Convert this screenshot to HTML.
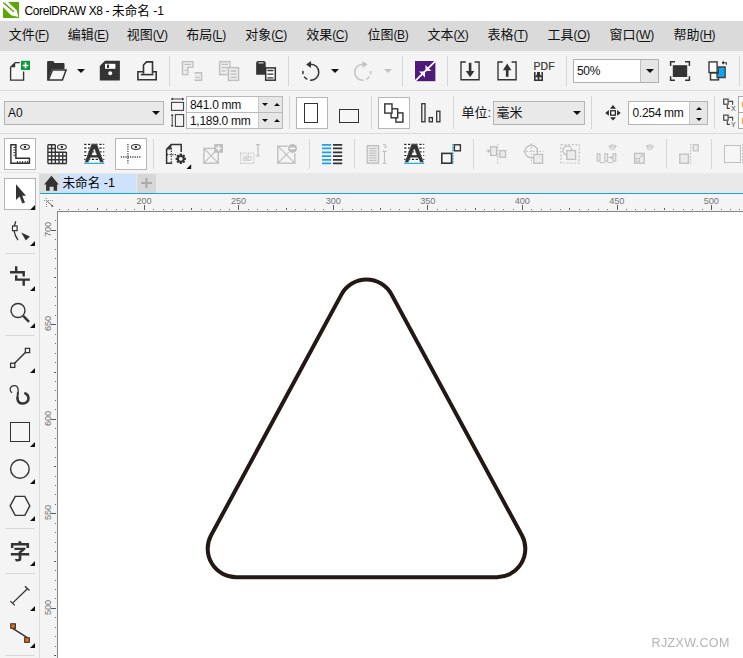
<!DOCTYPE html><html><head><meta charset="utf-8"><title>CorelDRAW X8</title><style>
*{margin:0;padding:0;box-sizing:border-box}
html,body{width:743px;height:658px;overflow:hidden;background:#fff}
body{position:relative;font-family:"Liberation Sans","Noto Sans CJK SC",sans-serif;color:#111;font-size:12px}
.a{position:absolute}
.t{position:absolute;white-space:nowrap;line-height:1}
.vs{position:absolute;width:1px;background:#d2d2d2}
.hs{position:absolute;height:1px;background:#d9d9d9}
.box{position:absolute;border:1px solid #b9b9b9;background:#fff}
.pb{position:absolute;border:1px solid #b6b6b6;background:#fff}
svg{position:absolute;overflow:visible}
.mi{position:absolute;top:28px;font-size:13px;line-height:14px;white-space:nowrap;color:#111}
.mi i{font-style:normal;font-size:12px;letter-spacing:-0.35px}
.mi u{text-decoration:underline;text-underline-offset:1.5px}
.rt{position:absolute;font-size:9.2px;color:#757575;line-height:1;letter-spacing:-0.1px;white-space:nowrap}
</style></head><body><div class="a" style="left:0;top:0;width:743px;height:21px;background:#fff"></div><div class="a" style="left:0;top:21px;width:743px;height:30px;background:#dadada"></div><div class="a" style="left:0;top:51px;width:743px;height:122px;background:#f4f4f4"></div><div class="hs" style="left:0;top:90px;width:743px"></div><div class="hs" style="left:0;top:133px;width:743px"></div><div class="a" style="left:0;top:173px;width:40px;height:485px;background:#f4f4f4"></div><div class="a" style="left:39px;top:173px;width:1px;height:485px;background:#dcdcdc"></div><div class="a" style="left:0;top:172px;width:39px;height:1px;background:#e6e6e6"></div><div class="a" style="left:40px;top:173px;width:703px;height:20px;background:#e9e9e9"></div><div class="a" style="left:60px;top:174px;width:76px;height:19px;background:#cee2fb"></div><div class="a" style="left:136.6px;top:174px;width:19.2px;height:19px;background:#d7d7d7"></div><div class="a" style="left:40px;top:192.7px;width:703px;height:1.4px;background:#0ca4ee"></div><div class="a" style="left:40px;top:194px;width:703px;height:18px;background:#f4f4f4"></div><div class="a" style="left:40px;top:194px;width:17px;height:464px;background:#f4f4f4"></div><div class="a" style="left:57px;top:211px;width:686px;height:447px;background:#fff;border-left:1px solid #858585;border-top:1px solid #858585"></div><svg style="left:3px;top:2px" width="16" height="16" viewBox="0 0 16 16"><rect width="16" height="16" fill="#5ea609"/><path d="M0 0H5.1L13.8 8.4L15.3 15L8.1 13.3L0 5Z" fill="#fff"/><path d="M0.7 0.9L10.6 9.5" stroke="#5ea609" stroke-width="1.4" stroke-linecap="round"/></svg><div class="t" id="title" style="left:24.5px;top:5px;font-size:12px;color:#000"><span id="tl" style="letter-spacing:-0.4px">CorelDRAW X8 - </span><span id="tc" style="font-size:12.6px">未命名</span> -1</div><div class="mi" style="left:8.7px">文件<i>(<u>F</u>)</i></div><div class="mi" style="left:67.7px">编辑<i>(<u>E</u>)</i></div><div class="mi" style="left:126.7px">视图<i>(<u>V</u>)</i></div><div class="mi" style="left:186.2px">布局<i>(<u>L</u>)</i></div><div class="mi" style="left:245.2px">对象<i>(<u>C</u>)</i></div><div class="mi" style="left:306.2px">效果<i>(<u>C</u>)</i></div><div class="mi" style="left:367.4px">位图<i>(<u>B</u>)</i></div><div class="mi" style="left:427.4px">文本<i>(<u>X</u>)</i></div><div class="mi" style="left:487.6px">表格<i>(<u>T</u>)</i></div><div class="mi" style="left:547.6px">工具<i>(<u>O</u>)</i></div><div class="mi" style="left:609.6px">窗口<i>(<u>W</u>)</i></div><div class="mi" style="left:673.6px">帮助<i>(<u>H</u>)</i></div><svg style="left:9px;top:60px" width="22" height="22" viewBox="0 0 22 22"><path d="M10.8 2.6H6.2L1.6 7.2V20.1H14.6V11.4" fill="#f8f8f8" stroke="#333" stroke-width="1.35"/><path d="M1.6 7.2H6.2V2.6Z" fill="#333"/><rect x="12" y="0.8" width="9" height="9.2" fill="#0b9d3a"/><path d="M16.5 2.6V8.2M13.7 5.4H19.3" stroke="#fff" stroke-width="1.5"/></svg><svg style="left:46px;top:60px" width="22" height="22" viewBox="0 0 22 22"><path d="M1.1 20.6V2.2Q1.1 1.1 2.2 1.1H7.2L8.6 3H17.6Q18.5 3 18.5 3.9V9.2H6L1.8 20.6Z" fill="#333"/><path d="M6.5 9.9H20.1L16.4 19.9H2.4Z" fill="#f6f6f6" stroke="#333" stroke-width="1.5" stroke-linejoin="miter"/></svg><svg style="left:77.0px;top:69.0px" width="8" height="4" viewBox="0 0 8 4"><path d="M0 0H8L4.0 4Z" fill="#111"/></svg><svg style="left:99px;top:60px" width="22" height="22" viewBox="0 0 22 22"><path d="M0.8 6L6 0.8H20.9V20.6H0.8Z" fill="#333"/><rect x="6" y="3.8" width="10.4" height="5" fill="#fff"/><rect x="8" y="4.6" width="2" height="3.4" fill="#333"/><circle cx="11.2" cy="13.3" r="2" fill="#fff"/></svg><svg style="left:136px;top:60px" width="22" height="22" viewBox="0 0 22 22"><path d="M7.5 13.8V5L10.6 1.9H16.5V13.8" fill="#f6f6f6" stroke="#333" stroke-width="1.6"/><path d="M7 11.8H1.9V19.8H20.2V11.8H17" fill="none" stroke="#333" stroke-width="1.6"/><path d="M4.8 14.6H17.4" stroke="#333" stroke-width="1.6"/></svg><div class="vs" style="left:169px;top:56px;height:30px;background:#d6d6d6"></div><svg style="left:181px;top:60px" width="23" height="22" viewBox="0 0 23 22"><path d="M1.5 1.6H12V7.4H6.8V14.6H1.5Z" fill="#ececec" stroke="#bfbfbf" stroke-width="1.4"/><path d="M3.5 4.4H10M3.5 10.4H5.5" stroke="#bfbfbf" stroke-width="1.4"/><path d="M13.6 12.8H20.6V20.3H13.6" fill="#ececec" stroke="#bfbfbf" stroke-width="1.4"/><path d="M14 17.4H18.6" stroke="#bfbfbf" stroke-width="1.2"/><path d="M14 12.8H16" stroke="#bfbfbf" stroke-width="1.4" stroke-dasharray="1 1"/></svg><svg style="left:218px;top:60px" width="23" height="22" viewBox="0 0 23 22"><rect x="1.6" y="1.6" width="10.4" height="13" fill="#ececec" stroke="#bfbfbf" stroke-width="1.4"/><path d="M3.6 4.4H10M3.6 7.6H10M3.6 10.8H8" stroke="#bfbfbf" stroke-width="1.3"/><rect x="10.4" y="7.6" width="10.2" height="12.8" fill="#ececec" stroke="#bfbfbf" stroke-width="1.4"/><path d="M12.6 11H18.4M12.6 14.2H18.4M12.6 17.4H18.4" stroke="#bfbfbf" stroke-width="1.3"/></svg><svg style="left:255px;top:60px" width="23" height="22" viewBox="0 0 23 22"><path d="M1.15 14.7V3Q1.15 1 3.15 1H8.7Q10.7 1 10.7 3V14.7Z" fill="#333"/><rect x="3.4" y="2.3" width="5.2" height="1.3" rx="0.6" fill="#dcdcdc"/><rect x="10.7" y="7.9" width="9.6" height="12.3" fill="#fff" stroke="#333" stroke-width="1.5"/><path d="M12.4 10.5H18.4M12.4 14.2H18.4M12.4 17.8H18.4" stroke="#333" stroke-width="1.3"/></svg><div class="vs" style="left:288px;top:56px;height:30px;background:#d6d6d6"></div><svg style="left:299px;top:60px" width="23" height="22" viewBox="0 0 23 22"><g><path d="M11.62 4.20A8.0 8.0 0 1 1 11.06 20.16M8.39 19.39A8.0 8.0 0 0 1 5.19 16.56M4.14 14.14A8.0 8.0 0 0 1 4.00 10.95" fill="none" stroke="#333" stroke-width="1.5"/><path d="M12.0 0.8999999999999995V8.1L7.1000000000000005 4.6Z" fill="#333"/></g></svg><svg style="left:331.0px;top:69.2px" width="8" height="4" viewBox="0 0 8 4"><path d="M0 0H8L4.0 4Z" fill="#111"/></svg><svg style="left:352.1px;top:60px" width="23" height="22" viewBox="0 0 23 22"><g transform="translate(22.6 0) scale(-1 1)"><path d="M11.62 4.20A8.0 8.0 0 1 1 11.06 20.16M8.39 19.39A8.0 8.0 0 0 1 5.19 16.56M4.14 14.14A8.0 8.0 0 0 1 4.00 10.95" fill="none" stroke="#c2c2c2" stroke-width="1.5"/><path d="M12.0 0.8999999999999995V8.1L7.1000000000000005 4.6Z" fill="#c2c2c2"/></g></svg><svg style="left:384.0px;top:69.2px" width="8" height="4" viewBox="0 0 8 4"><path d="M0 0H8L4.0 4Z" fill="#c2c2c2"/></svg><div class="vs" style="left:402px;top:56px;height:30px;background:#d6d6d6"></div><svg style="left:414.8px;top:60.8px" width="20.4" height="20.2" viewBox="0 0 20.4 20.2"><rect x="-0.5" y="-0.5" width="21.4" height="21.2" fill="#fafafa"/><rect width="20.4" height="20.2" fill="#4f1a79"/><path d="M-0.2 20.4L20.6 -0.2" stroke="#fff" stroke-width="1.7"/><path d="M10.5 4.1V10H16.3Z" fill="#fff"/><path d="M4.1 10.5H10V16.4Z" fill="#fff"/></svg><div class="vs" style="left:447px;top:56px;height:30px;background:#d6d6d6"></div><svg style="left:459px;top:60px" width="22" height="22" viewBox="0 0 22 22"><path d="M6.8 2H2V19.7H20.1V2H15.6" fill="none" stroke="#333" stroke-width="1.35"/><path d="M11.1 2.8V13" stroke="#333" stroke-width="2.6"/><path d="M6.8 10.9H15.4L11.1 17.2Z" fill="#333"/></svg><svg style="left:496px;top:60px" width="22" height="22" viewBox="0 0 22 22"><path d="M6.8 2H2V19.7H20.1V2H15.6" fill="none" stroke="#333" stroke-width="1.35"/><path d="M11.2 7.5V16.8" stroke="#333" stroke-width="2.6"/><path d="M6.9 10.2H15.5L11.2 3.6Z" fill="#333"/></svg><div class="t" style="left:533.6px;top:61.9px;font-size:10.4px;color:#333;letter-spacing:0.05px;-webkit-text-stroke:0.2px #333">PDF</div><svg style="left:534px;top:71.8px" width="9" height="9" viewBox="0 0 9 9"><rect x="0" y="0" width="9" height="9" fill="#333"/><path d="M1.6 0H3V2.2L1.6 4.2ZM7.4 0H6V2.2L7.4 4.2Z" fill="#f4f4f4"/><path d="M1.6 5.2H3.6V7.4H1.6ZM5.4 5.2H7.4V7.4H5.4Z" fill="#f4f4f4"/></svg><div class="vs" style="left:566px;top:56px;height:30px;background:#d6d6d6"></div><div class="a" style="left:573px;top:59px;width:86px;height:24px;border:1px solid #b0b0b0;background:#fff"></div><div class="a" style="left:640px;top:60px;width:18px;height:22px;background:#e6e6e6;border-left:1px solid #c0c0c0"></div><div class="t" style="left:577px;top:65px;font-size:12px;letter-spacing:-0.3px">50%</div><svg style="left:645.7px;top:69.0px" width="8" height="4" viewBox="0 0 8 4"><path d="M0 0H8L4.0 4Z" fill="#111"/></svg><svg style="left:669px;top:60px" width="22" height="22" viewBox="0 0 22 22"><rect x="3.8" y="5.2" width="14.4" height="11.8" fill="#333"/><path d="M1.6 6V1.8H6M16 1.8H20.4V6M20.4 16.2V20.2H16M6 20.2H1.6V16.2" fill="none" stroke="#333" stroke-width="1.5"/></svg><svg style="left:707px;top:60px" width="22" height="22" viewBox="0 0 22 22"><rect x="3.5" y="12.9" width="8" height="7" fill="#fbfbfb" stroke="#333" stroke-width="1.4"/><rect x="2" y="1.9" width="8.1" height="10.6" fill="#fbfbfb" stroke="#333" stroke-width="1.35"/><path d="M11.3 7H18.2V17.5H10V13.6H11.3Z" fill="#0aa8f5" stroke="#43403f" stroke-width="1.3"/><path d="M15.4 2.8H19.4V4.8M15.2 2.8L16.8 1.5M15.2 2.8L16.8 4.1" fill="none" stroke="#333" stroke-width="1.1"/></svg><div class="vs" style="left:739px;top:56px;height:30px;background:#d6d6d6"></div><div class="a" style="left:4px;top:101px;width:160px;height:24px;border:1px solid #b4b4b4;background:#e9e9e9"></div><div class="t" style="left:8px;top:106.5px;font-size:12px">A0</div><svg style="left:152.0px;top:111.0px" width="8" height="4" viewBox="0 0 8 4"><path d="M0 0H8L4.0 4Z" fill="#111"/></svg><div class="a" style="left:186px;top:96px;width:97px;height:17px;border:1px solid #b9b9b9;background:#fff"></div><div class="a" style="left:186px;top:112px;width:97px;height:17px;border:1px solid #b9b9b9;background:#fff"></div><div class="a" style="left:258px;top:97px;width:24px;height:15px;background:#e6e6e6;border-left:1px solid #c8c8c8"></div><div class="a" style="left:258px;top:113px;width:24px;height:15px;background:#e6e6e6;border-left:1px solid #c8c8c8"></div><div class="t" style="left:190px;top:99.4px;font-size:12px;letter-spacing:-0.3px">841.0 mm</div><div class="t" style="left:190px;top:115.4px;font-size:12px;letter-spacing:-0.3px">1,189.0 mm</div><svg style="left:262.0px;top:103.0px" width="6" height="3" viewBox="0 0 6 3"><path d="M0 0H6L3.0 3Z" fill="#111"/></svg><svg style="left:274.0px;top:103.0px" width="6" height="3" viewBox="0 0 6 3"><path d="M0 3H6L3.0 0Z" fill="#111"/></svg><svg style="left:262.0px;top:119.0px" width="6" height="3" viewBox="0 0 6 3"><path d="M0 0H6L3.0 3Z" fill="#111"/></svg><svg style="left:274.0px;top:119.0px" width="6" height="3" viewBox="0 0 6 3"><path d="M0 3H6L3.0 0Z" fill="#111"/></svg><div class="vs" style="left:289px;top:96px;height:33px;background:#d6d6d6"></div><div class="pb" style="left:296px;top:97px;width:32px;height:32px"></div><div class="a" style="left:303.9px;top:102.6px;width:14.4px;height:20.4px;border:1.5px solid #333;background:#fff"></div><div class="a" style="left:338.8px;top:109px;width:20.2px;height:13.8px;border:1.5px solid #333;background:#f6f6f6"></div><div class="vs" style="left:371px;top:96px;height:33px;background:#d6d6d6"></div><div class="pb" style="left:378px;top:97px;width:32px;height:32px"></div><svg style="left:170px;top:96px" width="16" height="16" viewBox="0 0 16 16"><rect x="1.5" y="6.4" width="12" height="8" fill="none" stroke="#444" stroke-width="1.1"/><path d="M1 3H14" stroke="#444" stroke-width="1"/><path d="M1 3L3 1.6V4.4ZM14 3L12 1.6V4.4Z" fill="#444"/></svg><svg style="left:170px;top:112px" width="16" height="16" viewBox="0 0 16 16"><rect x="5.4" y="2.6" width="8.2" height="11.8" fill="none" stroke="#444" stroke-width="1.1"/><path d="M2.2 2.2V14.8" stroke="#444" stroke-width="1"/><path d="M2.2 2L0.8 4H3.6ZM2.2 15L0.8 13H3.6Z" fill="#444"/></svg><svg style="left:384px;top:102px" width="22" height="22" viewBox="0 0 22 22"><rect x="11.9" y="10.9" width="7" height="9.2" fill="#fff" stroke="#333" stroke-width="1.4"/><rect x="7.1" y="6.8" width="6.6" height="9" fill="#fff" stroke="#333" stroke-width="1.4"/><rect x="0.8" y="1.9" width="7.2" height="9.2" fill="#fff" stroke="#333" stroke-width="1.4"/></svg><svg style="left:420px;top:102px" width="22" height="22" viewBox="0 0 22 22"><rect x="1.8" y="1.7" width="3.2" height="18.1" fill="#f6f6f6" stroke="#333" stroke-width="1.3"/><rect x="9.2" y="15.6" width="3.2" height="4.2" fill="#f6f6f6" stroke="#333" stroke-width="1.3"/><rect x="16.7" y="9.2" width="3.2" height="10.6" fill="#f6f6f6" stroke="#333" stroke-width="1.3"/></svg><svg style="left:605px;top:105px" width="17" height="17" viewBox="0 0 17 17"><rect x="5.65" y="5.75" width="4.7" height="4.4" fill="#fff" stroke="#2b2b2b" stroke-width="1.3"/><path d="M8 0.1L11 3.7H5ZM8 15.6L11 12.15H5ZM0.2 7.95L3.9 5.1V10.8ZM15.75 7.95L12.1 5.1V10.8Z" fill="#2b2b2b"/></svg><svg style="left:722px;top:98px" width="16" height="15" viewBox="0 0 16 15"><rect x="1.7" y="1.1" width="4.4" height="5.1" fill="#f6f6f6" stroke="#444" stroke-width="1.2"/><path d="M6.7 3.4H10.6V6.8M5.3 7V10.3H7.8" fill="none" stroke="#444" stroke-width="1.15"/></svg><div class="t" style="left:731px;top:105.3px;font-size:7px;color:#444">X</div><svg style="left:722px;top:114px" width="16" height="15" viewBox="0 0 16 15"><rect x="1.7" y="1.1" width="4.4" height="5.1" fill="#f6f6f6" stroke="#444" stroke-width="1.2"/><path d="M6.7 3.4H10.6V6.8M5.3 7V10.3H7.8" fill="none" stroke="#444" stroke-width="1.15"/></svg><div class="t" style="left:731px;top:121.3px;font-size:7px;color:#444">Y</div><div class="vs" style="left:453px;top:96px;height:33px;background:#d6d6d6"></div><div class="t" style="left:461.5px;top:105.5px;font-size:13px">单位:</div><div class="a" style="left:493px;top:101px;width:92px;height:24px;border:1px solid #b4b4b4;background:#e9e9e9"></div><div class="t" style="left:496.5px;top:105.5px;font-size:13px">毫米</div><svg style="left:573.0px;top:111.0px" width="8" height="4" viewBox="0 0 8 4"><path d="M0 0H8L4.0 4Z" fill="#111"/></svg><div class="vs" style="left:591px;top:96px;height:33px;background:#d6d6d6"></div><div class="a" style="left:628px;top:101px;width:80px;height:24px;border:1px solid #b4b4b4;background:#fff"></div><div class="a" style="left:689px;top:102px;width:18px;height:22px;background:#e6e6e6;border-left:1px solid #c8c8c8"></div><div class="t" style="left:632.5px;top:107px;font-size:12px;letter-spacing:-0.3px">0.254 mm</div><svg style="left:696.0px;top:106.5px" width="6" height="3" viewBox="0 0 6 3"><path d="M0 3H6L3.0 0Z" fill="#111"/></svg><svg style="left:696.0px;top:117.5px" width="6" height="3" viewBox="0 0 6 3"><path d="M0 0H6L3.0 3Z" fill="#111"/></svg><div class="vs" style="left:714px;top:96px;height:33px;background:#d6d6d6"></div><div class="a" style="left:738px;top:96px;width:10px;height:17px;border:1px solid #a8a8a8;background:#fff"></div><div class="a" style="left:738px;top:112px;width:10px;height:17px;border:1px solid #a8a8a8;background:#fff"></div><div class="a" style="left:741.6px;top:102.2px;width:2px;height:5px;background:#ffa030"></div><div class="a" style="left:741.6px;top:118.2px;width:2px;height:5.4px;background:#ffa030"></div><div class="pb" style="left:4px;top:138px;width:32px;height:32px"></div><div class="pb" style="left:115px;top:138px;width:32px;height:32px"></div><svg style="left:10px;top:143px" width="22" height="22" viewBox="0 0 22 22"><path d="M0.9 1.8H5.9V15.3H19.4V20.2H0.9Z" fill="#fff" stroke="#333" stroke-width="1.5"/><path d="M3.4 4.4H5.6M3.4 7H5.6M3.4 9.6H5.6M3.4 12.2H5.6" stroke="#333" stroke-width="1"/><path d="M7.4 18V20.2M10 18V20.2M12.6 18V20.2M15.2 18V20.2M17.4 18V20.2" stroke="#333" stroke-width="1"/><ellipse cx="15" cy="4" rx="4.4" ry="2.5" fill="#fff" stroke="#333" stroke-width="1.1"/><circle cx="15" cy="4" r="1.25" fill="#333"/></svg><svg style="left:47px;top:143px" width="22" height="22" viewBox="0 0 22 22"><g transform="translate(0 0.6)"><rect x="0.9" y="1.1" width="7.4" height="18.8" fill="#fff"/><rect x="0.9" y="8.6" width="18.5" height="11.3" fill="#fff"/><path d="M0.90 1.1V19.9M4.60 1.1V19.9M8.30 1.1V19.9M12.00 8.5V19.9M15.70 8.5V19.9M19.40 8.5V19.9M0.9 1.10H8.3M0.9 4.86H8.3M0.9 8.62H19.4M0.9 12.38H19.4M0.9 16.14H19.4M0.9 19.90H19.4" stroke="#333" stroke-width="1.35" fill="none"/></g><ellipse cx="14.9" cy="4" rx="4.4" ry="2.5" fill="#fff" stroke="#333" stroke-width="1.1"/><circle cx="14.9" cy="4" r="1.25" fill="#333"/></svg><svg style="left:83.8px;top:143.2px" width="21" height="21" viewBox="0 0 21 21"><rect x="-0.2" y="-0.2" width="20.9" height="21.4" fill="#fcfcfc"/><path d="M0.2 1.3H20.3M0.2 5.1H20.3M0.2 8.9H20.3M0.2 12.5H20.3M0.2 16.4H20.3" stroke="#222" stroke-width="1.2" stroke-dasharray="2.3 1.5" fill="none"/><path d="M7.5 0.8L0.5 19.5H4.3L6.56 14.7H13.94L16.2 19.5H20L13 0.8ZM10.25 5.9L7.9 11.9H12.6Z" fill="#333" fill-rule="evenodd" stroke="#fcfcfc" stroke-width="0.4"/><path d="M0.2 20.3H20.3" stroke="#00a0e9" stroke-width="1.1"/></svg><svg style="left:403.7px;top:143.2px" width="21" height="21" viewBox="0 0 21 21"><rect x="-0.2" y="-0.2" width="20.9" height="21.4" fill="#fcfcfc"/><path d="M0.2 1.3H20.3M0.2 5.1H20.3M0.2 8.9H20.3M0.2 12.5H20.3M0.2 16.4H20.3" stroke="#222" stroke-width="1.2" stroke-dasharray="2.3 1.5" fill="none"/><path d="M7.5 0.8L0.5 19.5H4.3L6.56 14.7H13.94L16.2 19.5H20L13 0.8ZM10.25 5.9L7.9 11.9H12.6Z" fill="#333" fill-rule="evenodd" stroke="#fcfcfc" stroke-width="0.4"/><path d="M0.2 20.3H20.3" stroke="#00a0e9" stroke-width="1.1"/></svg><svg style="left:120px;top:143px" width="22" height="22" viewBox="0 0 22 22"><path d="M7.9 1V21" stroke="#444" stroke-width="1.3" stroke-dasharray="1.2 1.1"/><path d="M0.8 14H21" stroke="#444" stroke-width="1.3" stroke-dasharray="1.2 1.1"/><ellipse cx="15.9" cy="4" rx="4.4" ry="2.5" fill="#fff" stroke="#333" stroke-width="1.1"/><circle cx="15.9" cy="4" r="1.25" fill="#333"/></svg><div class="vs" style="left:153px;top:139px;height:30px;background:#d6d6d6"></div><svg style="left:165px;top:143px" width="28" height="27" viewBox="0 0 28 27"><path d="M7.2 20.2H1.6V6.2L6.2 1.6H16.2V9" fill="none" stroke="#333" stroke-width="1.5"/><path d="M2 6.4H6.4V2Z" fill="#333"/><path d="M6.4 5V19.5" stroke="#333" stroke-width="1.1" stroke-dasharray="1.3 1.3"/><path d="M2 11.6H11" stroke="#333" stroke-width="1.1" stroke-dasharray="1.3 1.3"/><path d="M20.99 14.75L20.99 16.85L19.13 17.17L19.12 17.19L20.22 18.73L18.73 20.22L17.19 19.12L17.17 19.13L16.85 20.99L14.75 20.99L14.43 19.13L14.41 19.12L12.87 20.22L11.38 18.73L12.48 17.19L12.47 17.17L10.61 16.85L10.61 14.75L12.47 14.43L12.48 14.41L11.38 12.87L12.87 11.38L14.41 12.48L14.43 12.47L14.75 10.61L16.85 10.61L17.17 12.47L17.19 12.48L18.73 11.38L20.22 12.87L19.12 14.41L19.13 14.43Z M17.7 15.8A1.9 1.9 0 1 0 13.9 15.8A1.9 1.9 0 1 0 17.7 15.8Z" fill="#333" fill-rule="evenodd"/><path d="M26.2 21.2V26H21.4Z" fill="#111"/></svg><svg style="left:203px;top:143px" width="22" height="22" viewBox="0 0 22 22"><rect x="0.9" y="5.4" width="14.4" height="14.8" fill="none" stroke="#bfbfbf" stroke-width="1.4"/><path d="M0.9 5.4L15.3 20.2M15.3 5.4L0.9 20.2" stroke="#bfbfbf" stroke-width="1.2"/><rect x="11.2" y="1" width="8.8" height="8.8" fill="#bfbfbf"/><path d="M15.6 2.8V8M13 5.4H18.2" stroke="#fff" stroke-width="1.3"/></svg><svg style="left:240px;top:143px" width="22" height="22" viewBox="0 0 22 22"><rect x="0.7" y="10.2" width="13.2" height="10.2" fill="none" stroke="#bfbfbf" stroke-width="1.2" stroke-dasharray="1.2 1.2"/><path d="M16 1.6H20M16 13H20M18 1.6V13" stroke="#bfbfbf" stroke-width="1.2" fill="none"/></svg><div class="t" style="left:242.4px;top:154.2px;font-size:8.5px;color:#bfbfbf">ab</div><svg style="left:276px;top:143px" width="22" height="22" viewBox="0 0 22 22"><rect x="1.8" y="3.2" width="17" height="17" fill="none" stroke="#bfbfbf" stroke-width="1.4"/><path d="M1.8 3.2L18.8 20.2M18.8 3.2L1.8 20.2" stroke="#bfbfbf" stroke-width="1.2"/><circle cx="16.5" cy="5.4" r="5.4" fill="#f4f4f4"/><circle cx="16.5" cy="5.4" r="4.5" fill="#bfbfbf"/><path d="M13.8 5.4H19.2" stroke="#fff" stroke-width="1.4"/></svg><div class="vs" style="left:309px;top:139px;height:30px;background:#d6d6d6"></div><svg style="left:322px;top:143.8px" width="22" height="21" viewBox="0 0 22 21"><path d="M0 0.8H9.2M0 4.4H9.2M0 8.4H9.2M0 12.1H9.2M0 15.9H9.2M0 19.3H9.2" stroke="#1e9fe8" stroke-width="1.7"/><g transform="translate(11 0)"><path d="M0 0.8H9.2M0 4.4H9.2M0 8.4H9.2M0 12.1H9.2M0 15.9H9.2M0 19.3H9.2" stroke="#333" stroke-width="1.7"/></g></svg><div class="vs" style="left:354px;top:139px;height:30px;background:#d6d6d6"></div><svg style="left:366px;top:143px" width="22" height="22" viewBox="0 0 22 22"><rect x="1.2" y="2.6" width="11.4" height="17.6" fill="#e9e9e9" stroke="#bfbfbf" stroke-width="1.3"/><path d="M3 5.4H10.6M3 7.8H10.6M3 10.2H10.6M3 12.6H10.6M3 15H10.6M3 17.4H10.6" stroke="#bfbfbf" stroke-width="1"/><path d="M16.4 8.4H20.6M16.4 20.2H20.6M18.5 8.4V20.2" stroke="#bfbfbf" stroke-width="1.1" fill="none"/><path d="M17 1.4H19.4V4.6M18 3.6L19.4 5L20.6 3.6" stroke="#bfbfbf" stroke-width="1" fill="none"/></svg><svg style="left:440px;top:143px" width="22" height="22" viewBox="0 0 22 22"><path d="M12.9 1V21" stroke="#1e9fe8" stroke-width="1.4" stroke-dasharray="1.6 1.2"/><rect x="1.8" y="10.4" width="9.8" height="9.8" fill="#f6f6f6" stroke="#333" stroke-width="1.6"/><rect x="14.4" y="1.8" width="6" height="6" fill="#f6f6f6" stroke="#333" stroke-width="1.4"/></svg><div class="vs" style="left:473px;top:139px;height:30px;background:#d6d6d6"></div><svg style="left:485px;top:143px" width="22" height="22" viewBox="0 0 22 22"><path d="M12.7 1V21" stroke="#bfbfbf" stroke-width="1.2" stroke-dasharray="1.6 1.4"/><rect x="5.6" y="3.8" width="6" height="8.6" fill="#ececec" stroke="#bfbfbf" stroke-width="1.3"/><rect x="14.9" y="7.6" width="5.6" height="6.6" fill="#ececec" stroke="#bfbfbf" stroke-width="1.3"/><path d="M1 8H4.4M2.8 6.4L4.4 8L2.8 9.6" stroke="#bfbfbf" stroke-width="1.1" fill="none"/></svg><svg style="left:523px;top:143px" width="22" height="22" viewBox="0 0 22 22"><circle cx="8.3" cy="8.5" r="6.3" fill="none" stroke="#bfbfbf" stroke-width="1.3"/><path d="M8.3 0.6V20.8M0.4 8.5H20.6" stroke="#bfbfbf" stroke-width="1.1" stroke-dasharray="1.6 1.6"/><rect x="10.8" y="11.4" width="8.8" height="8.8" fill="#ececec" stroke="#bfbfbf" stroke-width="1.3"/></svg><svg style="left:560px;top:143px" width="22" height="22" viewBox="0 0 22 22"><rect x="1" y="1.8" width="18.2" height="18.2" fill="none" stroke="#bfbfbf" stroke-width="1.2" stroke-dasharray="2 1.6"/><circle cx="7.4" cy="7.6" r="4.4" fill="none" stroke="#bfbfbf" stroke-width="1.3"/><rect x="6.8" y="7.6" width="8.8" height="8.8" fill="#ececec" stroke="#bfbfbf" stroke-width="1.3"/></svg><svg style="left:596px;top:143px" width="22" height="22" viewBox="0 0 22 22"><rect x="1.2" y="10.8" width="2.8" height="7.4" fill="#ececec" stroke="#bfbfbf" stroke-width="1.1"/><rect x="8.8" y="10.8" width="2.8" height="7.4" fill="#ececec" stroke="#bfbfbf" stroke-width="1.1"/><rect x="17" y="10.8" width="2.8" height="7.4" fill="#ececec" stroke="#bfbfbf" stroke-width="1.1"/><path d="M4 19.6H8.8M12.4 14.5H16.4M14.9 13L16.4 14.5L14.9 16M11.6 19.6H17" stroke="#bfbfbf" stroke-width="1" fill="none"/><path d="M12.8 3.2L16.6 1.6L20.4 3.2L16.6 4.6Z" fill="#e4e4e4" stroke="#bfbfbf" stroke-width="0.9"/><path d="M14.200000000000001 4.2V5.8Q16.6 7.6000000000000005 19.0 5.8V4.2" fill="none" stroke="#bfbfbf" stroke-width="0.9"/></svg><svg style="left:633px;top:143px" width="22" height="22" viewBox="0 0 22 22"><rect x="1.6" y="10.4" width="9.6" height="9.8" fill="#ececec" stroke="#bfbfbf" stroke-width="1.3"/><rect x="3.2" y="15.4" width="3.4" height="3.4" fill="none" stroke="#bfbfbf" stroke-width="0.9"/><path d="M5.8 15.8L9.6 12M7.4 12H9.6V14.2" stroke="#bfbfbf" stroke-width="0.9" fill="none"/><path d="M13 3.2L16.8 1.6L20.6 3.2L16.8 4.6Z" fill="#e4e4e4" stroke="#bfbfbf" stroke-width="0.9"/><path d="M14.4 4.2V5.8Q16.8 7.6000000000000005 19.2 5.8V4.2" fill="none" stroke="#bfbfbf" stroke-width="0.9"/></svg><div class="vs" style="left:666px;top:139px;height:30px;background:#d6d6d6"></div><svg style="left:678px;top:143px" width="22" height="22" viewBox="0 0 22 22"><path d="M12.6 1V21" stroke="#bfbfbf" stroke-width="1.2" stroke-dasharray="1.6 1.4"/><rect x="1.8" y="11.2" width="8.6" height="9" fill="#ececec" stroke="#bfbfbf" stroke-width="1.3"/><rect x="15.2" y="1.8" width="5" height="6" fill="#ececec" stroke="#bfbfbf" stroke-width="1.2"/></svg><div class="vs" style="left:711px;top:139px;height:30px;background:#d6d6d6"></div><div class="a" style="left:724px;top:145px;width:17.4px;height:17.6px;border:1.4px solid #bfbfbf;background:#f6f6f6"></div><svg style="left:741px;top:143px" width="3" height="22" viewBox="0 0 3 22"><path d="M1.6 1V21" stroke="#bfbfbf" stroke-width="1.2" stroke-dasharray="1.6 1.4"/></svg><div class="a" style="left:40px;top:174px;width:20px;height:19px;background:#dcdcdc"></div><svg style="left:44px;top:176px" width="15" height="15" viewBox="0 0 15 15"><path d="M7.45 -0.3L0.1 8.4H2.1V14.7H5.6V10.7H9.6V14.7H13.1V8.4H14.8Z" fill="#333"/></svg><div class="t" style="left:62.5px;top:177.1px;font-size:12.6px;color:#000">未命名 -1</div><svg style="left:141px;top:178px" width="11" height="10" viewBox="0 0 11 10"><path d="M5.4 0.1V9.9M0 5H11" stroke="#ababab" stroke-width="2.1" fill="none"/></svg><svg style="left:0;top:0" width="743" height="658" viewBox="0 0 743 658" shape-rendering="crispEdges"><rect x="59" y="209" width="1" height="1" fill="#6c6c6c"/><rect x="68" y="209" width="1" height="1" fill="#6c6c6c"/><rect x="78" y="209" width="1" height="1" fill="#6c6c6c"/><rect x="87" y="209" width="1" height="1" fill="#6c6c6c"/><rect x="97" y="208" width="1" height="2" fill="#5c5c5c"/><rect x="106" y="209" width="1" height="1" fill="#6c6c6c"/><rect x="116" y="209" width="1" height="1" fill="#6c6c6c"/><rect x="125" y="209" width="1" height="1" fill="#6c6c6c"/><rect x="134" y="209" width="1" height="1" fill="#6c6c6c"/><rect x="144" y="205" width="1" height="5" fill="#5c5c5c"/><rect x="153" y="209" width="1" height="1" fill="#6c6c6c"/><rect x="163" y="209" width="1" height="1" fill="#6c6c6c"/><rect x="172" y="209" width="1" height="1" fill="#6c6c6c"/><rect x="182" y="209" width="1" height="1" fill="#6c6c6c"/><rect x="191" y="208" width="1" height="2" fill="#5c5c5c"/><rect x="201" y="209" width="1" height="1" fill="#6c6c6c"/><rect x="210" y="209" width="1" height="1" fill="#6c6c6c"/><rect x="220" y="209" width="1" height="1" fill="#6c6c6c"/><rect x="229" y="209" width="1" height="1" fill="#6c6c6c"/><rect x="238" y="205" width="1" height="5" fill="#5c5c5c"/><rect x="248" y="209" width="1" height="1" fill="#6c6c6c"/><rect x="257" y="209" width="1" height="1" fill="#6c6c6c"/><rect x="267" y="209" width="1" height="1" fill="#6c6c6c"/><rect x="276" y="209" width="1" height="1" fill="#6c6c6c"/><rect x="286" y="208" width="1" height="2" fill="#5c5c5c"/><rect x="295" y="209" width="1" height="1" fill="#6c6c6c"/><rect x="305" y="209" width="1" height="1" fill="#6c6c6c"/><rect x="314" y="209" width="1" height="1" fill="#6c6c6c"/><rect x="323" y="209" width="1" height="1" fill="#6c6c6c"/><rect x="333" y="205" width="1" height="5" fill="#5c5c5c"/><rect x="342" y="209" width="1" height="1" fill="#6c6c6c"/><rect x="352" y="209" width="1" height="1" fill="#6c6c6c"/><rect x="361" y="209" width="1" height="1" fill="#6c6c6c"/><rect x="371" y="209" width="1" height="1" fill="#6c6c6c"/><rect x="380" y="208" width="1" height="2" fill="#5c5c5c"/><rect x="390" y="209" width="1" height="1" fill="#6c6c6c"/><rect x="399" y="209" width="1" height="1" fill="#6c6c6c"/><rect x="409" y="209" width="1" height="1" fill="#6c6c6c"/><rect x="418" y="209" width="1" height="1" fill="#6c6c6c"/><rect x="427" y="205" width="1" height="5" fill="#5c5c5c"/><rect x="437" y="209" width="1" height="1" fill="#6c6c6c"/><rect x="446" y="209" width="1" height="1" fill="#6c6c6c"/><rect x="456" y="209" width="1" height="1" fill="#6c6c6c"/><rect x="465" y="209" width="1" height="1" fill="#6c6c6c"/><rect x="475" y="208" width="1" height="2" fill="#5c5c5c"/><rect x="484" y="209" width="1" height="1" fill="#6c6c6c"/><rect x="494" y="209" width="1" height="1" fill="#6c6c6c"/><rect x="503" y="209" width="1" height="1" fill="#6c6c6c"/><rect x="513" y="209" width="1" height="1" fill="#6c6c6c"/><rect x="522" y="205" width="1" height="5" fill="#5c5c5c"/><rect x="531" y="209" width="1" height="1" fill="#6c6c6c"/><rect x="541" y="209" width="1" height="1" fill="#6c6c6c"/><rect x="550" y="209" width="1" height="1" fill="#6c6c6c"/><rect x="560" y="209" width="1" height="1" fill="#6c6c6c"/><rect x="569" y="208" width="1" height="2" fill="#5c5c5c"/><rect x="579" y="209" width="1" height="1" fill="#6c6c6c"/><rect x="588" y="209" width="1" height="1" fill="#6c6c6c"/><rect x="598" y="209" width="1" height="1" fill="#6c6c6c"/><rect x="607" y="209" width="1" height="1" fill="#6c6c6c"/><rect x="617" y="205" width="1" height="5" fill="#5c5c5c"/><rect x="626" y="209" width="1" height="1" fill="#6c6c6c"/><rect x="635" y="209" width="1" height="1" fill="#6c6c6c"/><rect x="645" y="209" width="1" height="1" fill="#6c6c6c"/><rect x="654" y="209" width="1" height="1" fill="#6c6c6c"/><rect x="664" y="208" width="1" height="2" fill="#5c5c5c"/><rect x="673" y="209" width="1" height="1" fill="#6c6c6c"/><rect x="683" y="209" width="1" height="1" fill="#6c6c6c"/><rect x="692" y="209" width="1" height="1" fill="#6c6c6c"/><rect x="702" y="209" width="1" height="1" fill="#6c6c6c"/><rect x="711" y="205" width="1" height="5" fill="#5c5c5c"/><rect x="721" y="209" width="1" height="1" fill="#6c6c6c"/><rect x="730" y="209" width="1" height="1" fill="#6c6c6c"/><rect x="739" y="209" width="1" height="1" fill="#6c6c6c"/><rect x="55" y="220" width="1" height="1" fill="#6c6c6c"/><rect x="51" y="230" width="5" height="1" fill="#5c5c5c"/><rect x="55" y="239" width="1" height="1" fill="#6c6c6c"/><rect x="55" y="249" width="1" height="1" fill="#6c6c6c"/><rect x="55" y="258" width="1" height="1" fill="#6c6c6c"/><rect x="55" y="268" width="1" height="1" fill="#6c6c6c"/><rect x="54" y="277" width="2" height="1" fill="#5c5c5c"/><rect x="55" y="287" width="1" height="1" fill="#6c6c6c"/><rect x="55" y="296" width="1" height="1" fill="#6c6c6c"/><rect x="55" y="305" width="1" height="1" fill="#6c6c6c"/><rect x="55" y="315" width="1" height="1" fill="#6c6c6c"/><rect x="51" y="324" width="5" height="1" fill="#5c5c5c"/><rect x="55" y="334" width="1" height="1" fill="#6c6c6c"/><rect x="55" y="343" width="1" height="1" fill="#6c6c6c"/><rect x="55" y="353" width="1" height="1" fill="#6c6c6c"/><rect x="55" y="362" width="1" height="1" fill="#6c6c6c"/><rect x="54" y="372" width="2" height="1" fill="#5c5c5c"/><rect x="55" y="381" width="1" height="1" fill="#6c6c6c"/><rect x="55" y="390" width="1" height="1" fill="#6c6c6c"/><rect x="55" y="400" width="1" height="1" fill="#6c6c6c"/><rect x="55" y="409" width="1" height="1" fill="#6c6c6c"/><rect x="51" y="419" width="5" height="1" fill="#5c5c5c"/><rect x="55" y="428" width="1" height="1" fill="#6c6c6c"/><rect x="55" y="438" width="1" height="1" fill="#6c6c6c"/><rect x="55" y="447" width="1" height="1" fill="#6c6c6c"/><rect x="55" y="457" width="1" height="1" fill="#6c6c6c"/><rect x="54" y="466" width="2" height="1" fill="#5c5c5c"/><rect x="55" y="476" width="1" height="1" fill="#6c6c6c"/><rect x="55" y="485" width="1" height="1" fill="#6c6c6c"/><rect x="55" y="494" width="1" height="1" fill="#6c6c6c"/><rect x="55" y="504" width="1" height="1" fill="#6c6c6c"/><rect x="51" y="513" width="5" height="1" fill="#5c5c5c"/><rect x="55" y="523" width="1" height="1" fill="#6c6c6c"/><rect x="55" y="532" width="1" height="1" fill="#6c6c6c"/><rect x="55" y="542" width="1" height="1" fill="#6c6c6c"/><rect x="55" y="551" width="1" height="1" fill="#6c6c6c"/><rect x="54" y="561" width="2" height="1" fill="#5c5c5c"/><rect x="55" y="570" width="1" height="1" fill="#6c6c6c"/><rect x="55" y="580" width="1" height="1" fill="#6c6c6c"/><rect x="55" y="589" width="1" height="1" fill="#6c6c6c"/><rect x="55" y="598" width="1" height="1" fill="#6c6c6c"/><rect x="51" y="608" width="5" height="1" fill="#5c5c5c"/><rect x="55" y="617" width="1" height="1" fill="#6c6c6c"/><rect x="55" y="627" width="1" height="1" fill="#6c6c6c"/><rect x="55" y="636" width="1" height="1" fill="#6c6c6c"/><rect x="55" y="646" width="1" height="1" fill="#6c6c6c"/><rect x="54" y="655" width="2" height="1" fill="#5c5c5c"/></svg><div class="rt" style="left:134.1px;top:196.5px;width:20px;text-align:center">200</div><div class="rt" style="left:228.6px;top:196.5px;width:20px;text-align:center">250</div><div class="rt" style="left:323.2px;top:196.5px;width:20px;text-align:center">300</div><div class="rt" style="left:417.7px;top:196.5px;width:20px;text-align:center">350</div><div class="rt" style="left:512.2px;top:196.5px;width:20px;text-align:center">400</div><div class="rt" style="left:606.7px;top:196.5px;width:20px;text-align:center">450</div><div class="rt" style="left:701.2px;top:196.5px;width:20px;text-align:center">500</div><div class="rt" style="left:38.9px;top:224.7px;width:20px;height:9.2px;text-align:center;transform:rotate(-90deg);transform-origin:50% 50%">700</div><div class="rt" style="left:38.9px;top:319.2px;width:20px;height:9.2px;text-align:center;transform:rotate(-90deg);transform-origin:50% 50%">650</div><div class="rt" style="left:38.9px;top:413.8px;width:20px;height:9.2px;text-align:center;transform:rotate(-90deg);transform-origin:50% 50%">600</div><div class="rt" style="left:38.9px;top:508.3px;width:20px;height:9.2px;text-align:center;transform:rotate(-90deg);transform-origin:50% 50%">550</div><div class="rt" style="left:38.9px;top:602.8px;width:20px;height:9.2px;text-align:center;transform:rotate(-90deg);transform-origin:50% 50%">500</div><svg style="left:43px;top:197px" width="12" height="12" viewBox="0 0 12 12"><path d="M1 3.5H11" stroke="#8a8a8a" stroke-width="1" stroke-dasharray="1 1" fill="none"/><path d="M3.5 1V11" stroke="#8a8a8a" stroke-width="1" stroke-dasharray="1 1" fill="none"/><path d="M3.6 3.6L9.2 8.8" stroke="#666" stroke-width="1" fill="none"/><rect x="8.5" y="8.2" width="1.6" height="1.6" fill="#444"/></svg><div class="a" style="left:4px;top:178px;width:32px;height:32px;border:1px solid #b4b4b4;background:#fff"></div><svg style="left:14px;top:183px" width="14" height="22" viewBox="0 0 14 22"><path d="M2 1.2V16.9L5.6 13.6L8.3 20.6L11 19.5L8.2 12.8L12 12.7Z" fill="#333"/></svg><svg style="left:30.4px;top:204.5px" width="5" height="5" viewBox="0 0 5 5"><path d="M5 0V5H0Z" fill="#111"/></svg><svg style="left:10px;top:220px" width="22" height="22" viewBox="0 0 22 22"><path d="M5.8 1.4Q1.4 10.6 8 20.2" fill="none" stroke="#333" stroke-width="1.3"/><rect x="2.5" y="6" width="4.6" height="4.6" fill="#fff" stroke="#333" stroke-width="1.2"/><path d="M11.2 12.4L19.9 16.6L15.8 20.6Z" fill="#333"/></svg><svg style="left:30.4px;top:240.89999999999998px" width="5" height="5" viewBox="0 0 5 5"><path d="M5 0V5H0Z" fill="#111"/></svg><div class="hs" style="left:5px;top:253px;width:30px;background:#d8d8d8"></div><svg style="left:9px;top:265px" width="22" height="22" viewBox="0 0 22 22"><path d="M7.2 1.2V7.3M1 7.3H14.7V11.6" fill="none" stroke="#333" stroke-width="2.4"/><path d="M7.2 10.3V14.6H20.85M14.7 14.6V20.8" fill="none" stroke="#333" stroke-width="2.4"/></svg><svg style="left:30.4px;top:285.8px" width="5" height="5" viewBox="0 0 5 5"><path d="M5 0V5H0Z" fill="#111"/></svg><svg style="left:9px;top:302px" width="22" height="22" viewBox="0 0 22 22"><circle cx="9" cy="8.5" r="7" fill="none" stroke="#333" stroke-width="1.4"/><path d="M14.2 13.8L20 19.8" stroke="#333" stroke-width="2.4"/></svg><svg style="left:30.4px;top:323.09999999999997px" width="5" height="5" viewBox="0 0 5 5"><path d="M5 0V5H0Z" fill="#111"/></svg><div class="hs" style="left:5px;top:335px;width:30px;background:#d8d8d8"></div><svg style="left:9px;top:347px" width="22" height="22" viewBox="0 0 22 22"><path d="M3.4 18.4L18.4 3.4" stroke="#333" stroke-width="1.4"/><rect x="1.6" y="16.2" width="4.2" height="4.2" fill="#fff" stroke="#333" stroke-width="1.3"/><rect x="16.4" y="1.4" width="4.2" height="4.2" fill="#fff" stroke="#333" stroke-width="1.3"/></svg><svg style="left:30.4px;top:368.09999999999997px" width="5" height="5" viewBox="0 0 5 5"><path d="M5 0V5H0Z" fill="#111"/></svg><svg style="left:9px;top:384px" width="22" height="23" viewBox="0 0 22 23"><path d="M2.7 8.4C0.9 7 0.5 4 2.5 2.5C4.5 1 8 1.2 9 4.5C9.6 7 8.7 10 8.5 13" fill="none" stroke="#333" stroke-width="1.3" stroke-linecap="round"/><path d="M8.9 8C8.6 11 8.2 13.6 8.6 15.5" fill="none" stroke="#333" stroke-width="1.8"/><path d="M8.5 14C8.5 17.4 10.5 19.6 13.8 19.6C17.3 19.6 19.6 17 19.5 14.2C19.4 11.8 18.3 10.3 16.3 9.4" fill="none" stroke="#333" stroke-width="2.5" stroke-linecap="round"/></svg><div class="a" style="left:10px;top:422px;width:20px;height:20px;border:1.4px solid #333;background:#f6f6f6"></div><svg style="left:30.4px;top:442.0px" width="5" height="5" viewBox="0 0 5 5"><path d="M5 0V5H0Z" fill="#111"/></svg><svg style="left:9px;top:458px" width="22" height="22" viewBox="0 0 22 22"><circle cx="10.9" cy="11" r="9.3" fill="#f6f6f6" stroke="#333" stroke-width="1.4"/></svg><svg style="left:30.4px;top:479.0px" width="5" height="5" viewBox="0 0 5 5"><path d="M5 0V5H0Z" fill="#111"/></svg><svg style="left:9px;top:495px" width="22" height="22" viewBox="0 0 22 22"><path d="M1.2 10.9L6.2 1.4H15.8L20.8 10.9L15.8 20.4H6.2Z" fill="#f6f6f6" stroke="#333" stroke-width="1.4"/></svg><svg style="left:30.4px;top:515.9000000000001px" width="5" height="5" viewBox="0 0 5 5"><path d="M5 0V5H0Z" fill="#111"/></svg><div class="hs" style="left:5px;top:528px;width:30px;background:#d8d8d8"></div><svg style="left:8px;top:538px;will-change:transform" width="24" height="26" viewBox="0 0 24 26"><text x="1.5" y="21" font-size="21" font-weight="700" fill="#333" font-family="Liberation Sans, Noto Sans CJK SC, sans-serif">字</text></svg><svg style="left:30.4px;top:561.2px" width="5" height="5" viewBox="0 0 5 5"><path d="M5 0V5H0Z" fill="#111"/></svg><div class="hs" style="left:5px;top:573px;width:30px;background:#d8d8d8"></div><svg style="left:9px;top:585px" width="22" height="22" viewBox="0 0 22 22"><path d="M3.8 17.9L18.4 3.7" stroke="#333" stroke-width="1.3"/><path d="M1.3 16.1L5.8 20.4M15.9 1.3L20.5 5.5" stroke="#333" stroke-width="1.3"/></svg><svg style="left:30.4px;top:606.0px" width="5" height="5" viewBox="0 0 5 5"><path d="M5 0V5H0Z" fill="#111"/></svg><svg style="left:9px;top:622px" width="22" height="22" viewBox="0 0 22 22"><path d="M4 6.6L17.9 15.4" stroke="#333" stroke-width="1.4"/><rect x="1.8" y="1.8" width="4.6" height="4.5" fill="#ff6a00" stroke="#263238" stroke-width="1.1"/><rect x="15.7" y="15.7" width="4.6" height="4.6" fill="#ff6a00" stroke="#263238" stroke-width="1.1"/></svg><svg style="left:30.4px;top:643.1px" width="5" height="5" viewBox="0 0 5 5"><path d="M5 0V5H0Z" fill="#111"/></svg><div class="hs" style="left:5px;top:655px;width:30px;background:#d8d8d8"></div><svg style="left:0;top:0" width="743" height="658" viewBox="0 0 743 658"><path d="M341.51 294.37A28.4 28.4 0 0 1 391.49 294.37L521.89 535.3A28.4 28.4 0 0 1 496.9 577.2L236.1 577.2A28.4 28.4 0 0 1 211.11 535.3Z" fill="none" stroke="#231815" stroke-width="4"/></svg><div class="t" style="left:651.5px;top:636.5px;font-size:12.5px;letter-spacing:0.35px;color:#b4b4b4">RJZXW.COM</div></body></html>
